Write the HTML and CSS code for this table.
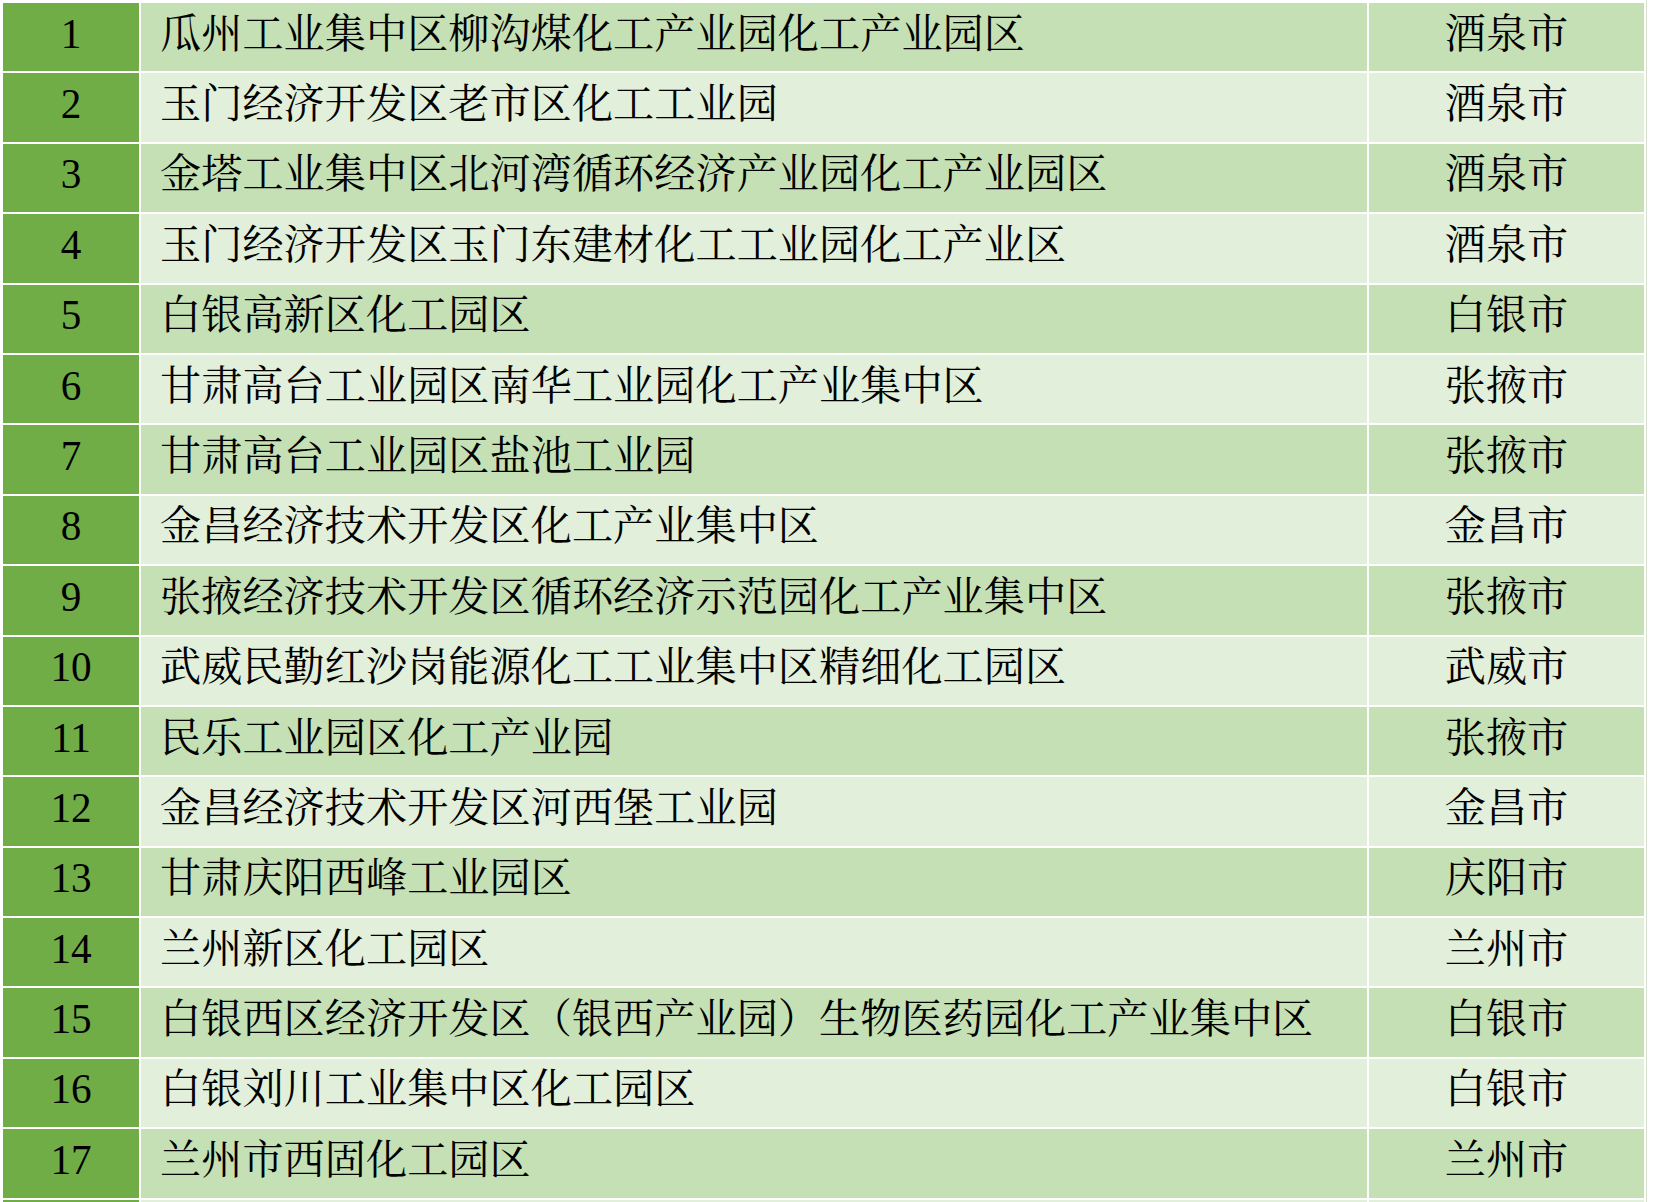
FILE: index.html
```html
<!DOCTYPE html>
<html lang="zh-CN">
<head>
<meta charset="utf-8">
<title>化工园区名单</title>
<link rel="stylesheet" href="styles.css">
</head>
<body>
<div class="sheet">
  <div class="table">
    <div class="row odd"><div class="num">1</div><div class="name">瓜州工业集中区柳沟煤化工产业园化工产业园区</div><div class="city">酒泉市</div></div>
    <div class="row even"><div class="num">2</div><div class="name">玉门经济开发区老市区化工工业园</div><div class="city">酒泉市</div></div>
    <div class="row odd"><div class="num">3</div><div class="name">金塔工业集中区北河湾循环经济产业园化工产业园区</div><div class="city">酒泉市</div></div>
    <div class="row even"><div class="num">4</div><div class="name">玉门经济开发区玉门东建材化工工业园化工产业区</div><div class="city">酒泉市</div></div>
    <div class="row odd"><div class="num">5</div><div class="name">白银高新区化工园区</div><div class="city">白银市</div></div>
    <div class="row even"><div class="num">6</div><div class="name">甘肃高台工业园区南华工业园化工产业集中区</div><div class="city">张掖市</div></div>
    <div class="row odd"><div class="num">7</div><div class="name">甘肃高台工业园区盐池工业园</div><div class="city">张掖市</div></div>
    <div class="row even"><div class="num">8</div><div class="name">金昌经济技术开发区化工产业集中区</div><div class="city">金昌市</div></div>
    <div class="row odd"><div class="num">9</div><div class="name">张掖经济技术开发区循环经济示范园化工产业集中区</div><div class="city">张掖市</div></div>
    <div class="row even"><div class="num">10</div><div class="name">武威民勤红沙岗能源化工工业集中区精细化工园区</div><div class="city">武威市</div></div>
    <div class="row odd"><div class="num">11</div><div class="name">民乐工业园区化工产业园</div><div class="city">张掖市</div></div>
    <div class="row even"><div class="num">12</div><div class="name">金昌经济技术开发区河西堡工业园</div><div class="city">金昌市</div></div>
    <div class="row odd"><div class="num">13</div><div class="name">甘肃庆阳西峰工业园区</div><div class="city">庆阳市</div></div>
    <div class="row even"><div class="num">14</div><div class="name">兰州新区化工园区</div><div class="city">兰州市</div></div>
    <div class="row odd"><div class="num">15</div><div class="name">白银西区经济开发区（银西产业园）生物医药园化工产业集中区</div><div class="city">白银市</div></div>
    <div class="row even"><div class="num">16</div><div class="name">白银刘川工业集中区化工园区</div><div class="city">白银市</div></div>
    <div class="row odd"><div class="num">17</div><div class="name">兰州市西固化工园区</div><div class="city">兰州市</div></div>
    <div class="row even edge"><div class="num"></div><div class="name"></div><div class="city"></div></div>
  </div>
</div>
</body>
</html>
```

FILE: styles.css
```css
html, body {
  margin: 0;
  padding: 0;
  background: #ffffff;
  overflow: hidden;
}

body {
  width: 1655px;
  height: 1202px;
}

.sheet {
  display: inline-block;
  padding: 3px 2px 0 3px;
  border-right: 1px solid #d3dfcb;
}

.table {
  display: grid;
  grid-template-columns: 136px 1226px 275px;
  grid-template-rows: repeat(17, 68.4px) 2px;
  column-gap: 2px;
  row-gap: 2px;
  font-family: "Liberation Serif", "Noto Serif CJK SC", "Noto Sans CJK SC", serif;
  font-size: 41.2px;
  color: #000000;
}

.row {
  display: contents;
}

.num,
.name,
.city {
  display: flex;
  align-items: center;
  padding-bottom: 6px;
  box-sizing: border-box;
  line-height: 1;
  white-space: nowrap;
  overflow: hidden;
}

.edge .num,
.edge .name,
.edge .city {
  padding: 0;
}

.num {
  justify-content: center;
  background: #70ad47;
}

.name {
  padding-left: 19px;
}

.city {
  justify-content: center;
}

.odd .name,
.odd .city {
  background: #c5e0b4;
}

.even .name,
.even .city {
  background: #e2efda;
}
```
